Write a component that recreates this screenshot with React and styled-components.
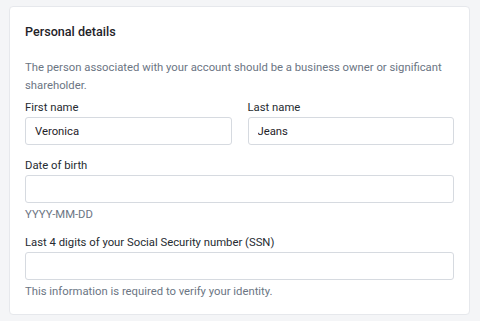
import styled, { createGlobalStyle } from "styled-components";

const Global = createGlobalStyle`
    body {
        margin: 0;
        background: #f4f5f7;
        font-family: Roboto, "Liberation Sans", Arial, sans-serif;
    }
`;

const Page = styled.div`
    padding: 6px 10px 7px 9px;
`;

const Card = styled.div`
    background: #fff;
    border: 1px solid #e6e8ec;
    border-radius: 4px;
    padding: 16px 15px 14px 15px;
`;

const Title = styled.h2`
    margin: 0;
    font-size: 12.6px;
    font-weight: 500;
    color: #1f2329;
    line-height: 18px;
`;

const Description = styled.p`
    margin: 18px 0 0;
    font-size: 11.3px;
    line-height: 18px;
    color: #6b7583;
`;

const Row = styled.div`
    display: grid;
    grid-template-columns: 1fr 1fr;
    gap: 16px;
    margin-top: 5px;
`;

const Field = styled.div`
    display: flex;
    flex-direction: column;
    min-width: 0;
    margin-top: ${(p) => p.$top || 0}px;
`;

const Label = styled.label`
    font-size: 11.3px;
    line-height: 16px;
    color: #262b31;
    margin-bottom: 1px;
`;

const Input = styled.input`
    box-sizing: border-box;
    width: 100%;
    height: 28px;
    border: 1px solid #d6dae0;
    border-radius: 3px;
    padding: 0 9px;
    font-family: inherit;
    font-size: 11.3px;
    color: #1f2329;
    outline: none;
`;

const Hint = styled.span`
    font-size: 11.3px;
    line-height: 16px;
    color: #6b7583;
    margin-top: 4px;
`;

export default function App() {
    return (
        <Page>
            <Global />
            <Card>
                <Title>Personal details</Title>
                <Description>
                    The person associated with your account should be a business owner or significant shareholder.
                </Description>
                <Row>
                    <Field>
                        <Label>First name</Label>
                        <Input defaultValue="Veronica" />
                    </Field>
                    <Field>
                        <Label>Last name</Label>
                        <Input defaultValue="Jeans" />
                    </Field>
                </Row>
                <Field $top={13}>
                    <Label>Date of birth</Label>
                    <Input />
                    <Hint>YYYY-MM-DD</Hint>
                </Field>
                <Field $top={12}>
                    <Label>Last 4 digits of your Social Security number (SSN)</Label>
                    <Input />
                    <Hint>This information is required to verify your identity.</Hint>
                </Field>
            </Card>
        </Page>
    );
}
